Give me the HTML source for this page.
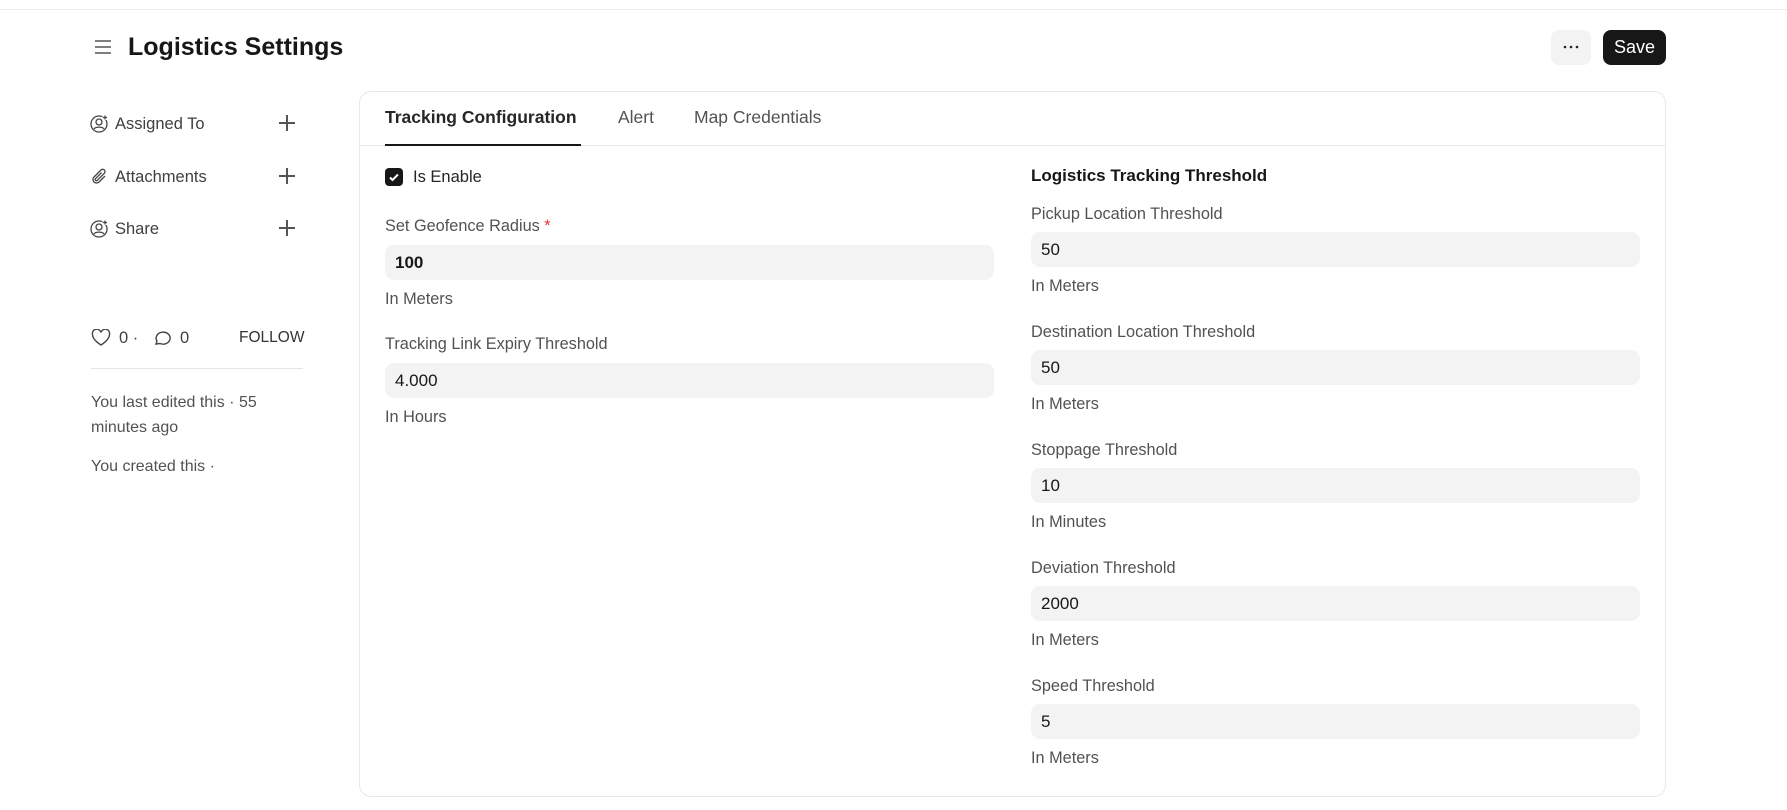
<!DOCTYPE html>
<html><head><meta charset="utf-8"><style>
*{box-sizing:border-box;margin:0;padding:0}
body{width:1787px;height:810px;background:#fff;font-family:"Liberation Sans",sans-serif;color:#171717;position:relative;overflow:hidden}
.a{position:absolute;white-space:nowrap}
.lbl{font-size:16.3px;color:#525252;line-height:20px}
.inp{position:absolute;background:#f3f3f3;border-radius:9px;height:35px;font-size:17px;color:#171717;line-height:35px;padding-left:10px}
.side{font-size:16.5px;color:#404040;line-height:20px}
.plus{position:absolute;width:16px;height:16px}
.plus:before{content:"";position:absolute;left:7px;top:0;width:1.6px;height:16px;background:#555}
.plus:after{content:"";position:absolute;top:7px;left:0;height:1.6px;width:16px;background:#555}
</style></head><body>
<div class="a" style="left:0;top:9px;width:1787px;height:1px;background:#ececec"></div>
<svg class="a" style="left:94px;top:38px" width="18" height="18" viewBox="0 0 18 18"><path d="M1 3h16M1 9h16M1 15h16" stroke="#555" stroke-width="1.4"/></svg>
<div class="a" style="left:128px;top:32px;font-size:25px;font-weight:bold;line-height:30px">Logistics Settings</div>
<div class="a" style="left:1551px;top:30px;width:40px;height:35px;background:#f3f3f3;border-radius:8px"></div>
<svg class="a" style="left:1562px;top:45px" width="18" height="4" viewBox="0 0 18 4"><circle cx="3" cy="2" r="1.3" fill="#222"/><circle cx="9" cy="2" r="1.3" fill="#222"/><circle cx="15" cy="2" r="1.3" fill="#222"/></svg>
<div class="a" style="left:1603px;top:30px;width:63px;height:35px;background:#171717;border-radius:8px;color:#fff;text-align:center;line-height:35px;font-size:18px">Save</div>

<!-- sidebar -->
<svg class="a" style="left:90px;top:114px" width="20" height="20" viewBox="0 0 20 20" fill="none" stroke="#444" stroke-width="1.3"><circle cx="9" cy="10" r="8"/><circle cx="9" cy="8" r="3"/><path d="M4 15c1.5-2.5 8.5-2.5 10 0"/><path d="M15 1v5M12.5 3.5h5" stroke="#fff" stroke-width="3"/><path d="M15 1.5v4M13 3.5h4"/></svg>
<div class="a side" style="left:115px;top:114px">Assigned To</div>
<div class="plus" style="left:279px;top:115px"></div>
<svg class="a" style="left:90px;top:167px" width="20" height="20" viewBox="0 0 20 20" fill="none" stroke="#444" stroke-width="1.3"><path d="M15 9l-6 6a3.5 3.5 0 0 1-5-5l7-7a2.3 2.3 0 0 1 3.3 3.3l-7 7a1.2 1.2 0 0 1-1.7-1.7l6-6"/></svg>
<div class="a side" style="left:115px;top:167px">Attachments</div>
<div class="plus" style="left:279px;top:168px"></div>
<svg class="a" style="left:90px;top:219px" width="20" height="20" viewBox="0 0 20 20" fill="none" stroke="#444" stroke-width="1.3"><circle cx="9" cy="10" r="8"/><circle cx="9" cy="8" r="3"/><path d="M4 15c1.5-2.5 8.5-2.5 10 0"/><path d="M15 1v5M12.5 3.5h5" stroke="#fff" stroke-width="3"/><path d="M15 1.5v4M13 3.5h4"/></svg>
<div class="a side" style="left:115px;top:219px">Share</div>
<div class="plus" style="left:279px;top:220px"></div>

<svg class="a" style="left:91px;top:329px" width="20" height="18" viewBox="0 0 20 18" fill="none" stroke="#444" stroke-width="1.4"><path d="M10 16S1.5 11 1.5 5.5A4 4 0 0 1 10 3.5a4 4 0 0 1 8.5 2C18.5 11 10 16 10 16z"/></svg>
<div class="a side" style="left:119px;top:328px">0 ·</div>
<svg class="a" style="left:152px;top:329px" width="20" height="18" viewBox="0 0 20 18" fill="none" stroke="#444" stroke-width="1.4"><path d="M4 15l1-3A7 6 0 1 1 8 14.5z"/></svg>
<div class="a side" style="left:180px;top:328px">0</div>
<div class="a" style="left:239px;top:328px;font-size:15.5px;color:#333;line-height:20px">FOLLOW</div>
<div class="a" style="left:91px;top:368px;width:212px;height:1px;background:#e5e5e5"></div>
<div class="a side" style="left:91px;top:390px;color:#525252;line-height:25px;font-size:16px">You last edited this · 55<br>minutes ago</div>
<div class="a side" style="left:91px;top:457px;color:#525252;font-size:16px">You created this ·</div>

<!-- card -->
<div class="a" style="left:359px;top:91px;width:1307px;height:706px;border:1px solid #e8e8e8;border-radius:12px"></div>
<div class="a" style="left:360px;top:145px;width:1305px;height:1px;background:#e8e8e8"></div>
<div class="a" style="left:385px;top:107px;font-size:17.5px;font-weight:bold;color:#262626;line-height:20px">Tracking Configuration</div>
<div class="a" style="left:385px;top:144px;width:196px;height:2px;background:#171717"></div>
<div class="a" style="left:618px;top:107px;font-size:17.5px;color:#525252;line-height:20px">Alert</div>
<div class="a" style="left:694px;top:107px;font-size:17.5px;color:#525252;line-height:20px">Map Credentials</div>

<div class="a" style="left:385px;top:168px;width:18px;height:18px;background:#171717;border-radius:4px"></div>
<svg class="a" style="left:385px;top:168px" width="18" height="18" viewBox="0 0 18 18"><path d="M5 9.5l2.5 2.5L13 6.5" stroke="#fff" stroke-width="2" fill="none"/></svg>
<div class="a" style="left:413px;top:167px;font-size:16.5px;color:#262626;line-height:20px">Is Enable</div>

<div class="a lbl" style="left:385px;top:216px">Set Geofence Radius <span style="color:#e03636">*</span></div>
<div class="inp" style="left:385px;top:245px;width:609px;font-weight:bold">100</div>
<div class="a lbl" style="left:385px;top:289px">In Meters</div>
<div class="a lbl" style="left:385px;top:334px">Tracking Link Expiry Threshold</div>
<div class="inp" style="left:385px;top:363px;width:609px">4.000</div>
<div class="a lbl" style="left:385px;top:407px">In Hours</div>

<div class="a" style="left:1031px;top:166px;font-size:17px;font-weight:bold;line-height:20px">Logistics Tracking Threshold</div>

<div class="a lbl" style="left:1031px;top:204px">Pickup Location Threshold</div>
<div class="inp" style="left:1031px;top:232px;width:609px">50</div>
<div class="a lbl" style="left:1031px;top:276px">In Meters</div>

<div class="a lbl" style="left:1031px;top:322px">Destination Location Threshold</div>
<div class="inp" style="left:1031px;top:350px;width:609px">50</div>
<div class="a lbl" style="left:1031px;top:394px">In Meters</div>

<div class="a lbl" style="left:1031px;top:440px">Stoppage Threshold</div>
<div class="inp" style="left:1031px;top:468px;width:609px">10</div>
<div class="a lbl" style="left:1031px;top:512px">In Minutes</div>

<div class="a lbl" style="left:1031px;top:558px">Deviation Threshold</div>
<div class="inp" style="left:1031px;top:586px;width:609px">2000</div>
<div class="a lbl" style="left:1031px;top:630px">In Meters</div>

<div class="a lbl" style="left:1031px;top:676px">Speed Threshold</div>
<div class="inp" style="left:1031px;top:704px;width:609px">5</div>
<div class="a lbl" style="left:1031px;top:748px">In Meters</div>
</body></html>
